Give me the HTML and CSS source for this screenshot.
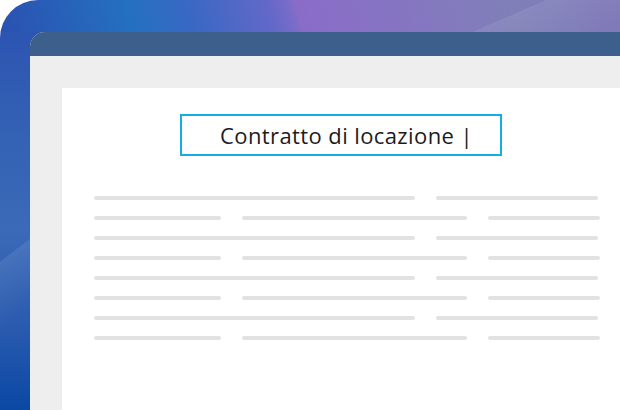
FILE: index.html
```html
<!DOCTYPE html>
<html lang="it">

<head>
    <meta charset="UTF-8">
    <meta name="viewport" content="width=device-width, initial-scale=1.0">
    <title>Contratto di locazione</title>
    <link rel="stylesheet" href="styles.css">
</head>

<body>
    <div class="device">
        <div class="screen">
            <div class="titlebar"></div>
            <div class="canvas">
                <div class="doc">
                    <div class="title-field">Contratto di locazione |</div>
                    <!-- righe di testo segnaposto -->
                    <div class="lines">
                        <div class="row">
                            <span class="bar w-321"></span>
                            <span class="bar w-162"></span>
                        </div>
                        <div class="row">
                            <span class="bar w-127"></span>
                            <span class="bar w-225"></span>
                            <span class="bar w-112"></span>
                        </div>
                        <div class="row">
                            <span class="bar w-321"></span>
                            <span class="bar w-162"></span>
                        </div>
                        <div class="row">
                            <span class="bar w-127"></span>
                            <span class="bar w-225"></span>
                            <span class="bar w-112"></span>
                        </div>
                        <div class="row">
                            <span class="bar w-321"></span>
                            <span class="bar w-162"></span>
                        </div>
                        <div class="row">
                            <span class="bar w-127"></span>
                            <span class="bar w-225"></span>
                            <span class="bar w-112"></span>
                        </div>
                        <div class="row">
                            <span class="bar w-321"></span>
                            <span class="bar w-162"></span>
                        </div>
                        <div class="row">
                            <span class="bar w-127"></span>
                            <span class="bar w-225"></span>
                            <span class="bar w-112"></span>
                        </div>
                    </div>
                </div>
            </div>
        </div>
    </div>
</body>

</html>
```

FILE: styles.css
```css
html,
body {
    margin: 0;
    padding: 0;
    background-color: #fff;
    overflow: hidden;
}

body {
    font-family: 'Open Sans', 'Liberation Sans', sans-serif;
    width: 620px;
    height: 410px;
}

.device {
    width: 620px;
    height: 410px;
    box-sizing: border-box;
    padding: 32px 0 0 30px;
    border-top-left-radius: 38px;
    background:
        linear-gradient(156.6deg, transparent 0 217px, rgba(255, 255, 255, 0.08) 217px, transparent 268px) top / 100% 32px no-repeat,
        linear-gradient(74deg, #2b51b1 0, #2470c0 130px, #3a68c4 190px, #6468c8 265px, #7a6cca 286px, #8a6cc8 292px, #8674c2 380px, #7f80b8 500px, #8078b8 620px) top / 100% 32px no-repeat,
        linear-gradient(142.6deg, transparent 0 208px, rgba(255, 255, 255, 0.09) 208px, transparent 262px),
        linear-gradient(180deg, #2a51b1 0, #3462b4 140px, #3a6ab8 230px, #3464b4 262px, #2c5cb0 320px, #0a48a4 410px);
}

.screen {
    height: 100%;
    display: flex;
    flex-direction: column;
    background-color: #eeeeee;
    border-top-left-radius: 15px;
    overflow: hidden;
}

.titlebar {
    height: 24px;
    flex-shrink: 0;
    background-color: #3d5f8b;
}

.canvas {
    flex: 1;
    display: flex;
    padding: 32px 0 0 32px;
}

.doc {
    flex: 1;
    background-color: #fff;
    padding: 26px 0 0 32px;
}

.title-field {
    box-sizing: border-box;
    width: 322px;
    height: 42px;
    margin-left: 86px;
    padding-left: 38px;
    display: flex;
    align-items: center;
    border: 2px solid #14ade8;
    font-size: 22px;
    letter-spacing: 0.4px;
    color: #1c1c1c;
    white-space: nowrap;
}

.lines {
    margin-top: 40px;
    display: flex;
    flex-direction: column;
    gap: 16px;
}

.row {
    display: flex;
    gap: 21px;
}

.bar {
    display: block;
    height: 4px;
    border-radius: 2px;
    background-color: #e2e2e2;
}

.w-321 { width: 321px; }
.w-162 { width: 162px; }
.w-127 { width: 127px; }
.w-225 { width: 225px; }
.w-112 { width: 112px; }
```
